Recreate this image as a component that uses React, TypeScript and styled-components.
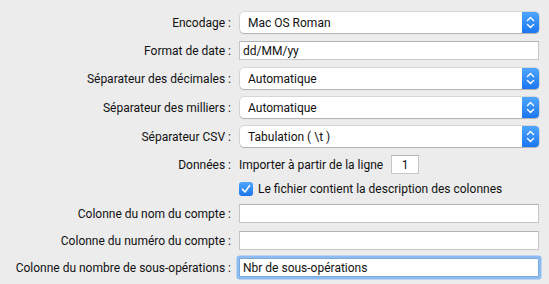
import React from "react";
import styled, { createGlobalStyle } from "styled-components";

const Global = createGlobalStyle`
  html, body { margin: 0; padding: 0; background: #ececec; }
  body {
    font-family: Roboto, "Liberation Sans", sans-serif;
    font-size: 12px;
    color: #111;
  }
`;

const Form = styled.div`
  width: 549px;
  height: 284px;
  box-sizing: border-box;
  padding: 12px 10px 0 0;
  display: flex;
  flex-direction: column;
  gap: 8px;
`;

const Row = styled.div<{ $h: number }>`
  display: flex;
  align-items: center;
  height: ${(p) => p.$h}px;
`;

const Label = styled.div`
  width: 233px;
  flex: none;
  text-align: right;
  padding-right: 2px;
  box-sizing: border-box;
  white-space: nowrap;
`;

const Control = styled.div`
  flex: 1;
  display: flex;
  align-items: center;
  height: 100%;
  padding-left: 6px;
`;

const Popup = styled.div`
  flex: 1;
  height: 21px;
  margin-left: 1px;
  display: flex;
  align-items: center;
  background: #fff;
  border-radius: 4px;
  box-shadow: 0 0 0 0.5px rgba(0, 0, 0, 0.18), 0 1px 1px rgba(0, 0, 0, 0.18);
  overflow: hidden;
`;

const PopupText = styled.span`
  flex: 1;
  padding-left: 8px;
`;

const Stepper = styled.div`
  width: 17px;
  height: 100%;
  background: linear-gradient(#4ea6fc, #1b76f0);
  display: flex;
  align-items: center;
  justify-content: center;
`;

const TextField = styled.div<{ $focus?: boolean }>`
  flex: 1;
  height: 19px;
  box-sizing: border-box;
  background: #fff;
  border: 1px solid #c6c6c6;
  border-top-color: #b4b4b4;
  padding-left: 3px;
  display: flex;
  align-items: center;
  ${(p) =>
    p.$focus
      ? `box-shadow: 0 0 0 2.5px #8cbcf0; border-color: #7aa9de; border-radius: 1px;`
      : ""}
`;

const SmallField = styled(TextField)`
  flex: none;
  width: 28px;
  margin-left: 8px;
  padding-left: 0;
  justify-content: center;
`;

const Checkbox = styled.div`
  width: 14px;
  height: 14px;
  border-radius: 3px;
  background: linear-gradient(#4ea6fc, #1b76f0);
  display: flex;
  align-items: center;
  justify-content: center;
  flex: none;
`;

const CheckLabel = styled.span`
  margin-left: 5px;
`;

const StepperIcon = () => (
  <svg width="9" height="13" viewBox="0 0 9 13">
    <path d="M1.5 4.5 L4.5 1.5 L7.5 4.5 M1.5 8.5 L4.5 11.5 L7.5 8.5" fill="none" stroke="#fff" strokeWidth="1.4" strokeLinecap="round" strokeLinejoin="round" />
  </svg>
);

const CheckIcon = () => (
  <svg width="10" height="10" viewBox="0 0 10 10">
    <path d="M1.5 5.2 L4 8 L8.6 1.6" fill="none" stroke="#fff" strokeWidth="1.6" strokeLinecap="round" strokeLinejoin="round" />
  </svg>
);

const PopupRow = ({ label, value }: { label: string; value: string }) => (
  <Row $h={21}>
    <Label>{label}</Label>
    <Control>
      <Popup>
        <PopupText>{value}</PopupText>
        <Stepper>
          <StepperIcon />
        </Stepper>
      </Popup>
    </Control>
  </Row>
);

const FieldRow = ({ label, value, focus }: { label: string; value?: string; focus?: boolean }) => (
  <Row $h={19}>
    <Label>{label}</Label>
    <Control>
      <TextField $focus={focus}>{value}</TextField>
    </Control>
  </Row>
);

export default function App() {
  return (
    <>
      <Global />
      <Form>
        <PopupRow label="Encodage :" value="Mac OS Roman" />
        <FieldRow label="Format de date :" value="dd/MM/yy" />
        <PopupRow label="Séparateur des décimales :" value="Automatique" />
        <PopupRow label="Séparateur des milliers :" value="Automatique" />
        <PopupRow label="Séparateur CSV :" value="Tabulation ( \t )" />
        <Row $h={19}>
          <Label>Données :</Label>
          <Control>
            <span>Importer à partir de la ligne</span>
            <SmallField>1</SmallField>
          </Control>
        </Row>
        <Row $h={14}>
          <Label />
          <Control>
            <Checkbox>
              <CheckIcon />
            </Checkbox>
            <CheckLabel>Le fichier contient la description des colonnes</CheckLabel>
          </Control>
        </Row>
        <FieldRow label="Colonne du nom du compte :" />
        <FieldRow label="Colonne du numéro du compte :" />
        <FieldRow label="Colonne du nombre de sous-opérations :" value="Nbr de sous-opérations" focus />
      </Form>
    </>
  );
}
